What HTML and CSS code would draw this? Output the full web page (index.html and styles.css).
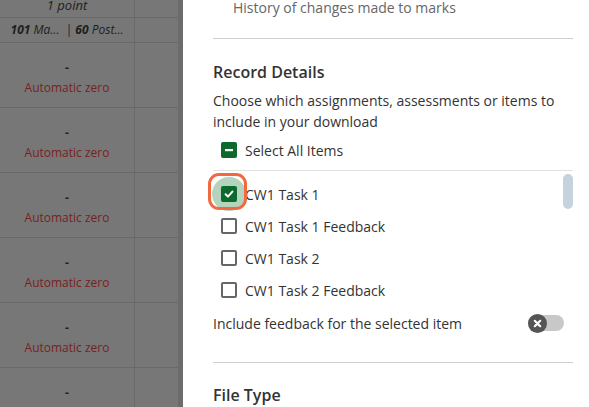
FILE: index.html
```html
<!DOCTYPE html>
<html>
<head>
<meta charset="utf-8">
<link rel="stylesheet" href="styles.css">
</head>
<body>
<div class="page">
  <div class="grid-area">
    <div class="table">
      <div class="row head1"><div class="c1"><i>1 point</i></div><div class="c2"></div></div>
      <div class="row head2"><div class="c1"><b><i>101</i></b> <i>Ma...</i>&nbsp; | <b><i>60</i></b> <i>Post...</i></div><div class="c2"></div></div>
      <div class="row data"><div class="c1"><span class="dash">-</span><span class="az">Automatic zero</span></div><div class="c2"></div></div>
      <div class="row data"><div class="c1"><span class="dash">-</span><span class="az">Automatic zero</span></div><div class="c2"></div></div>
      <div class="row data"><div class="c1"><span class="dash">-</span><span class="az">Automatic zero</span></div><div class="c2"></div></div>
      <div class="row data"><div class="c1"><span class="dash">-</span><span class="az">Automatic zero</span></div><div class="c2"></div></div>
      <div class="row data"><div class="c1"><span class="dash">-</span><span class="az">Automatic zero</span></div><div class="c2"></div></div>
      <div class="row data"><div class="c1"><span class="dash">-</span><span class="az">Automatic zero</span></div><div class="c2"></div></div>
    </div>
    <div class="edge"></div>
  </div>
  <div class="panel">
    <div class="history">History of changes made to marks</div>
    <div class="rule rule1"></div>
    <h2 class="heading">Record Details</h2>
    <p class="desc">Choose which assignments, assessments or items to include in your download</p>
    <div class="check-row select-all">
      <span class="box box-green"><svg width="16" height="16" viewBox="0 0 16 16"><rect x="4" y="7" width="8" height="2.2" fill="#fff"/></svg></span>
      <span>Select All Items</span>
    </div>
    <div class="list">
      <div class="check-row item focused">
        <span class="focus-wrap">
          <span class="halo"></span>
          <span class="ring"></span>
          <span class="box box-green"><svg width="16" height="16" viewBox="0 0 16 16"><path d="M4.6 8.2 L7 10.6 L11.4 5.6" fill="none" stroke="#fff" stroke-width="2" stroke-linecap="round" stroke-linejoin="round"/></svg></span>
        </span>
        <span>CW1 Task 1</span>
      </div>
      <div class="check-row item"><span class="box"></span><span>CW1 Task 1 Feedback</span></div>
      <div class="check-row item"><span class="box"></span><span>CW1 Task 2</span></div>
      <div class="check-row item"><span class="box"></span><span>CW1 Task 2 Feedback</span></div>
      <div class="thumb"></div>
    </div>
    <div class="toggle-row">
      <span>Include feedback for the selected item</span>
      <span class="toggle"><span class="knob"><svg width="19" height="19" viewBox="0 0 19 19"><path d="M6.8 6.8 L12.2 12.2 M12.2 6.8 L6.8 12.2" stroke="#fff" stroke-width="2.2" stroke-linecap="round"/></svg></span></span>
    </div>
    <div class="rule rule2"></div>
    <h2 class="heading filetype">File Type</h2>
  </div>
</div>
</body>
</html>
```

FILE: styles.css
```css
html, body {
  margin: 0;
  padding: 0;
  height: 100%;
  overflow: hidden;
  background: #fff;
}
body {
  font-family: "Open Sans", "Liberation Sans", sans-serif;
  color: #333;
}
.page {
  display: flex;
  width: 589px;
  height: 407px;
  overflow: hidden;
}
.grid-area {
  display: flex;
  width: 183px;
  flex: none;
  background: #777;
}
.table {
  width: 178px;
  margin-top: -8px;
}
.edge {
  width: 5px;
  background: #6b6b6b;
}
.row {
  display: flex;
  border-bottom: 1px solid #696969;
  box-sizing: border-box;
}
.c1 {
  width: 134px;
  border-right: 1px solid #6a6a6a;
  display: flex;
  flex-direction: column;
  align-items: center;
  color: #1e1e1e;
  font-size: 12px;
}
.c2 {
  flex: 1;
}
.head1 {
  height: 26px;
}
.head1 .c1 {
  justify-content: center;
  font-size: 13px;
}
.head2 {
  height: 25px;
}
.head2 .c1 {
  display: block;
  text-align: center;
  font-size: 12px;
  line-height: 24px;
  white-space: nowrap;
}
.data {
  height: 65px;
}
.data .c1 {
  padding-top: 15px;
}
.dash {
  line-height: 20px;
  font-weight: 700;
  color: #222;
}
.az {
  line-height: 20px;
  color: #7a1f1f;
  font-size: 12px;
}
.panel {
  flex: 1;
  padding: 0 16px 0 30px;
  display: flex;
  flex-direction: column;
  font-size: 14px;
}
.history {
  padding-left: 20px;
  line-height: 16px;
  color: #666;
}
.rule {
  height: 1px;
  background: #cfcfcf;
  flex: none;
}
.rule1 {
  margin-top: 22px;
}
.heading {
  margin: 22px 0 0;
  font-size: 16px;
  font-weight: 600;
  line-height: 22px;
  color: #333;
}
.desc {
  margin: 7px 0 0;
  line-height: 21px;
  color: #333;
}
.check-row {
  display: flex;
  align-items: center;
  gap: 8px;
  padding-left: 8px;
  color: #333;
}
.select-all {
  margin-top: 8px;
  height: 20px;
}
.box {
  display: block;
  width: 16px;
  height: 16px;
  box-sizing: border-box;
  border: 2px solid #666;
  border-radius: 2px;
  flex: none;
  position: relative;
}
.box-green {
  border: none;
  background: #0b6a2c;
}
.box svg {
  display: block;
}
.focus-wrap {
  display: block;
  position: relative;
  width: 16px;
  height: 16px;
  flex: none;
}
.halo {
  position: absolute;
  left: -9px;
  top: -9px;
  width: 34px;
  height: 34px;
  border-radius: 50%;
  background: #b4d4bd;
}
.ring {
  position: absolute;
  left: -13px;
  top: -13px;
  width: 39px;
  height: 37px;
  box-sizing: border-box;
  border: 3px solid #f2693f;
  border-radius: 11px;
}
.list {
  position: relative;
  margin-top: 10px;
  border-top: 1px solid #e2e2e2;
  padding-top: 7px;
}
.item {
  height: 32px;
}
.thumb {
  position: absolute;
  right: 0;
  top: 3px;
  width: 10px;
  height: 35px;
  border-radius: 5px;
  background: #c4d3de;
}
.toggle-row {
  margin-top: 5px;
  height: 24px;
  display: flex;
  align-items: center;
  justify-content: space-between;
  padding-right: 9px;
  color: #333;
}
.toggle {
  width: 36px;
  height: 16px;
  border-radius: 8px;
  background: #c8c8c8;
  display: flex;
  align-items: center;
}
.knob {
  width: 19px;
  height: 19px;
  border-radius: 50%;
  background: #555;
  flex: none;
}
.knob svg {
  display: block;
}
.rule2 {
  margin-top: 27px;
}
.filetype {
  margin-top: 21px;
}
```
